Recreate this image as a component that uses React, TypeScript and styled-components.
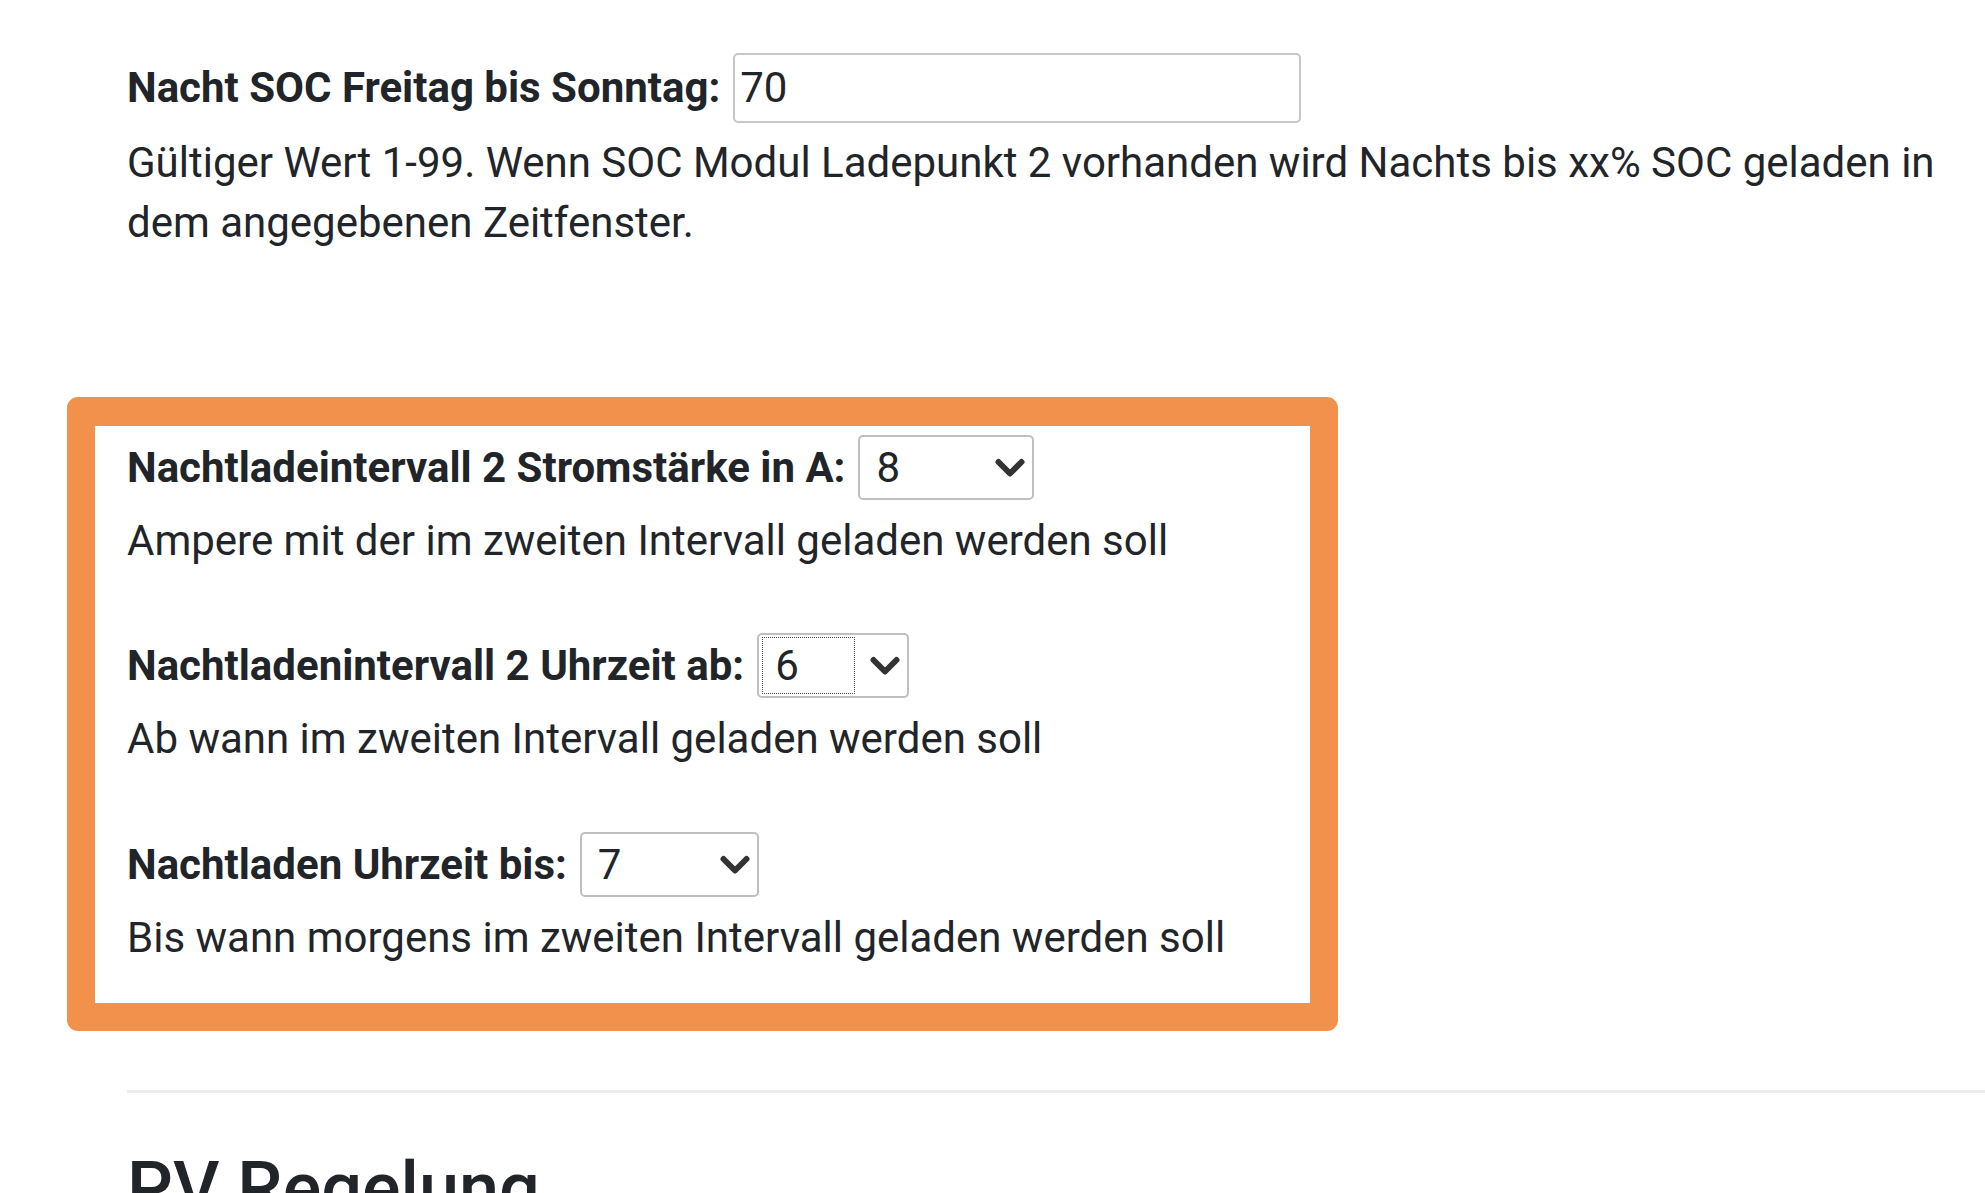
import React from "react";
import styled, { createGlobalStyle } from "styled-components";

const GlobalStyle = createGlobalStyle`
  html, body {
    margin: 0;
    padding: 0;
    background: #ffffff;
  }
  body {
    font-family: Roboto, "Liberation Sans", Arial, sans-serif;
    font-size: 42px;
    line-height: 60px;
    color: #212529;
    overflow: hidden;
  }
  * { box-sizing: border-box; }
`;

const Page = styled.div`
  padding: 53px 0 0 127px;
  width: 1985px;
`;

const FieldRow = styled.div<{ $h: number }>`
  display: flex;
  align-items: center;
  gap: 13px;
  height: ${(p) => p.$h}px;
`;

const Label = styled.label`
  font-weight: 700;
  white-space: nowrap;
`;

const TextInput = styled.div`
  width: 568px;
  height: 70px;
  border: 2px solid #c6c6c6;
  border-radius: 5px;
  padding-left: 5px;
  display: flex;
  align-items: center;
  font-weight: 400;
`;

const Description = styled.p<{ $mt: number }>`
  margin: ${(p) => p.$mt}px 0 0 0;
  font-weight: 400;
`;

const Highlight = styled.section`
  margin: 144px 0 0 -60px;
  width: 1271px;
  border: 28px solid #f2914b;
  border-top-width: 29px;
  border-radius: 11px;
  padding: 9px 0 35px 32px;
  background: #ffffff;
`;

const Group = styled.div<{ $mt: number }>`
  margin-top: ${(p) => p.$mt}px;
`;

const SelectBox = styled.div<{ $w: number }>`
  width: ${(p) => p.$w}px;
  height: 65px;
  border: 2px solid #bfbfbf;
  border-radius: 5px;
  display: flex;
  align-items: center;
  justify-content: space-between;
  padding: 0 7px 0 3px;
`;

const SelectValue = styled.span<{ $focused?: boolean; $w: number }>`
  width: ${(p) => p.$w}px;
  height: 57px;
  display: flex;
  align-items: center;
  padding-left: 12px;
  border: 1px dotted ${(p) => (p.$focused ? "#555" : "transparent")};
`;

const Chevron = styled.svg`
  width: 30px;
  height: 22px;
  flex: none;
`;

const Rule = styled.hr`
  margin: 59px 0 0 0;
  border: 0;
  height: 3px;
  background: #ececec;
`;

const SectionTitle = styled.h3`
  margin: 53px 0 0 0;
  font-size: 72px;
  font-weight: 500;
  line-height: 1.2;
  color: #212529;
`;

const ChevronIcon = () => (
  <Chevron viewBox="0 0 30 22">
    <polyline
      points="3.5,5 15,16.5 26.5,5"
      fill="none"
      stroke="#333333"
      strokeWidth="6"
      strokeLinecap="round"
      strokeLinejoin="round"
    />
  </Chevron>
);

type SelectProps = { value: string; width: number; valueWidth: number; focused?: boolean };

const Select = ({ value, width, valueWidth, focused }: SelectProps) => (
  <SelectBox $w={width}>
    <SelectValue $w={valueWidth} $focused={focused}>
      {value}
    </SelectValue>
    <ChevronIcon />
  </SelectBox>
);

const App: React.FC = () => (
  <>
    <GlobalStyle />
    <Page>
      <FieldRow $h={70}>
        <Label>Nacht SOC Freitag bis Sonntag:</Label>
        <TextInput>70</TextInput>
      </FieldRow>
      <Description $mt={10}>
        Gültiger Wert 1-99. Wenn SOC Modul Ladepunkt 2 vorhanden wird Nachts bis xx% SOC geladen in dem
        angegebenen Zeitfenster.
      </Description>

      <Highlight>
        <Group $mt={0}>
          <FieldRow $h={65}>
            <Label>Nachtladeintervall 2 Stromstärke in A:</Label>
            <Select value="8" width={176} valueWidth={110} />
          </FieldRow>
          <Description $mt={11}>Ampere mit der im zweiten Intervall geladen werden soll</Description>
        </Group>
        <Group $mt={62}>
          <FieldRow $h={65}>
            <Label>Nachtladenintervall 2 Uhrzeit ab:</Label>
            <Select value="6" width={152} valueWidth={93} focused />
          </FieldRow>
          <Description $mt={11}>Ab wann im zweiten Intervall geladen werden soll</Description>
        </Group>
        <Group $mt={63}>
          <FieldRow $h={65}>
            <Label>Nachtladen Uhrzeit bis:</Label>
            <Select value="7" width={179} valueWidth={110} />
          </FieldRow>
          <Description $mt={11}>Bis wann morgens im zweiten Intervall geladen werden soll</Description>
        </Group>
      </Highlight>

      <Rule />
      <SectionTitle>PV Regelung</SectionTitle>
    </Page>
  </>
);

export default App;
